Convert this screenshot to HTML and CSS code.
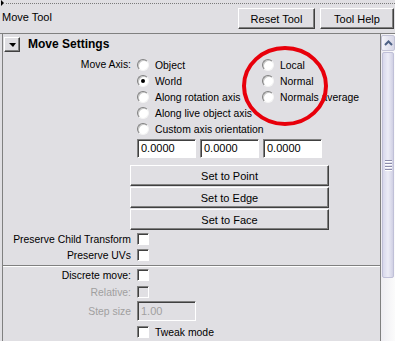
FILE: index.html
```html
<!DOCTYPE html>
<html lang="en">
  <head>
    <meta charset="UTF-8" />
    <title>Move Tool</title>
    <link rel="stylesheet" href="styles.css">
  </head>
  <body>
    <div class="dots_row"><span class="dots_arrow"></span><span class="dots_line"></span></div>
    <div class="tool_row">
      <span class="tool_name">Move Tool</span>
      <button class="btn btn_top btn_reset">Reset Tool</button>
      <button class="btn btn_top btn_help">Tool Help</button>
    </div>

    <div class="frame">
      <div class="panel">
        <div class="section_head">
          <span class="btn fold"><span class="fold_tri"></span></span>
          <span class="section_title">Move Settings</span>
        </div>

        <!-- move axis -->
        <div class="row axis_row">
          <span class="lbl">Move Axis:</span>
          <div class="axis_grid">
            <label class="opt"><span class="radio"></span>Object</label>
            <label class="opt"><span class="radio on"></span>World</label>
            <label class="opt"><span class="radio"></span>Along rotation axis</label>
            <label class="opt"><span class="radio"></span>Along live object axis</label>
            <label class="opt"><span class="radio"></span>Custom axis orientation</label>
            <label class="opt"><span class="radio"></span>Local</label>
            <label class="opt"><span class="radio"></span>Normal</label>
            <label class="opt"><span class="radio"></span>Normals average</label>
          </div>
        </div>

        <div class="fields">
          <span class="field">0.0000</span>
          <span class="field">0.0000</span>
          <span class="field">0.0000</span>
        </div>

        <div class="set_btns">
          <button class="btn btn_set">Set to Point</button>
          <button class="btn btn_set">Set to Edge</button>
          <button class="btn btn_set">Set to Face</button>
        </div>

        <div class="row check_row first_check">
          <span class="lbl">Preserve Child Transform</span>
          <span class="check"></span>
        </div>
        <div class="row check_row">
          <span class="lbl">Preserve UVs</span>
          <span class="check"></span>
        </div>

        <div class="sep"></div>

        <div class="row check_row discrete">
          <span class="lbl">Discrete move:</span>
          <span class="check"></span>
        </div>
        <div class="row check_row off">
          <span class="lbl">Relative:</span>
          <span class="check dis"></span>
        </div>
        <div class="row step_row off">
          <span class="lbl">Step size</span>
          <span class="field field_dis">1.00</span>
        </div>
        <div class="row check_row tweak">
          <span class="lbl"></span>
          <label class="opt"><span class="check"></span>Tweak mode</label>
        </div>
      </div>

      <div class="scrollbar">
        <div class="sb_up">
          <svg width="9" height="6" viewBox="0 0 9 6"><path d="M1 5 L4.5 1.5 L8 5" fill="none" stroke="#4d6185" stroke-width="2"/></svg>
        </div>
        <div class="sb_thumb">
          <span class="grip"></span><span class="grip"></span><span class="grip"></span><span class="grip"></span>
        </div>
        <div class="sb_track"></div>
      </div>
    </div>

    <svg class="mark" width="395" height="341" viewBox="0 0 395 341">
      <ellipse cx="285" cy="86" rx="41" ry="38" fill="none" stroke="#e8000b" stroke-width="4"/>
    </svg>
  </body>
</html>
```

FILE: styles.css
```css
  /* 기본 */
  body {
    margin: 0;
    width: 395px;
    height: 341px;
    overflow: hidden;
    background: #e0dfe3;
    font-family: "Liberation Sans", Arial, sans-serif;
    font-size: 10.4px;
    color: #000;
    position: relative;
  }

  /* 상단 점선 */
  .dots_row {
    display: flex;
    align-items: center;
    height: 6px;
  }
  .dots_arrow {
    width: 0;
    height: 0;
    margin-left: 1px;
    border-left: 3px solid #000;
    border-top: 3px solid transparent;
    border-bottom: 3px solid transparent;
  }
  .dots_line {
    flex: 1;
    margin-left: 2px;
    border-top: 1px dotted #7a7a7a;
  }

  /* 툴 이름 + 버튼 */
  .tool_row {
    display: flex;
    align-items: center;
    height: 21px;
    margin-top: 2px;
  }
  .tool_name {
    margin-left: 2px;
    margin-top: -3px;
    font-size: 11px;
  }

  .btn {
    background: #e0dfe3;
    border: 1px solid;
    border-color: #fff #404040 #404040 #fff;
    box-shadow: inset -1px -1px #808080;
    font-family: "Liberation Sans", Arial, sans-serif;
    font-size: 11px;
    color: #000;
    padding: 0;
    box-sizing: border-box;
  }
  .btn_top {
    height: 21px;
  }
  .btn_reset {
    margin-left: auto;
    width: 77px;
  }
  .btn_help {
    margin-left: 5px;
    margin-right: 1px;
    width: 74px;
  }

  /* 프레임 */
  .frame {
    display: flex;
    margin-top: 4px;
    border-top: 1px solid #808080;
    height: 307px;
  }
  .panel {
    flex: 1;
    margin-left: 2px;
    border-left: 1px solid #808080;
    border-right: 1px solid #808080;
  }

  .section_head {
    display: flex;
    align-items: center;
    height: 19px;
  }
  .fold {
    display: flex;
    align-items: center;
    justify-content: center;
    width: 16px;
    height: 15px;
    margin-left: 1px;
    margin-top: 1px;
  }
  .fold_tri {
    width: 0;
    height: 0;
    margin-top: 1px;
    border-top: 4px solid #000;
    border-left: 4px solid transparent;
    border-right: 3px solid transparent;
  }
  .section_title {
    margin-left: 8px;
    font-size: 12px;
    font-weight: bold;
  }

  /* 행 */
  .row {
    display: flex;
    align-items: center;
  }
  .lbl {
    width: 128px;
    margin-right: 6px;
    flex-shrink: 0;
    text-align: right;
    white-space: nowrap;
  }
  .axis_row {
    align-items: flex-start;
    margin-top: 4px;
  }
  .axis_row .lbl {
    line-height: 16px;
  }
  .axis_grid {
    display: grid;
    grid-template-columns: 125px auto;
    grid-template-rows: repeat(5, 16px);
    grid-auto-flow: column;
  }
  .opt {
    display: flex;
    align-items: center;
    white-space: nowrap;
  }

  .radio {
    flex-shrink: 0;
    width: 12px;
    height: 12px;
    margin-right: 6px;
    box-sizing: border-box;
    border-radius: 50%;
    border: 1px solid;
    border-color: #808080 #f4f4f4 #f4f4f4 #808080;
    box-shadow: inset 1px 1px #c8c8c8;
    background: #fff;
    position: relative;
  }
  .radio.on::after {
    content: "";
    position: absolute;
    left: 3px;
    top: 3px;
    width: 4px;
    height: 4px;
    border-radius: 50%;
    background: #000;
  }

  .check {
    flex-shrink: 0;
    width: 12px;
    height: 12px;
    box-sizing: border-box;
    border: 1px solid;
    border-color: #808080 #fff #fff #808080;
    box-shadow: inset 1px 1px #404040;
    background: #fff;
  }
  .check.dis {
    background: #e0dfe3;
  }
  .opt .check {
    margin-right: 6px;
  }

  /* 입력칸 */
  .fields {
    display: flex;
    gap: 4px;
    margin: 2px 0 0 134px;
  }
  .field {
    width: 59px;
    height: 19px;
    line-height: 17px;
    padding-left: 3px;
    box-sizing: border-box;
    border: 1px solid;
    border-color: #808080 #fff #fff #808080;
    box-shadow: inset 1px 1px #404040;
    background: #fff;
    font-size: 11px;
  }
  .field_dis {
    width: 59px;
    height: 20px;
    line-height: 18px;
    background: #e0dfe3;
    color: #a0a0a0;
  }

  /* Set to 버튼 */
  .set_btns {
    display: flex;
    flex-direction: column;
    gap: 1px;
    width: 199px;
    margin: 7px 0 0 127px;
  }
  .btn_set {
    height: 21px;
  }

  .check_row {
    height: 16px;
  }
  .first_check {
    margin-top: 1px;
  }

  .sep {
    margin-top: 2px;
    border-top: 1px solid #808080;
    border-bottom: 1px solid #fff;
  }

  .off .lbl {
    color: #a0a0a0;
  }
  .off.check_row {
    margin-top: 1px;
  }
  .step_row {
    height: 20px;
    margin-top: 1px;
  }
  .tweak {
    margin-top: 3px;
  }

  /* 스크롤바 */
  .scrollbar {
    width: 14px;
    display: flex;
    flex-direction: column;
    background: linear-gradient(to right, #eeedf2, #fbfbfb);
  }
  .sb_up {
    height: 16px;
    margin-top: 1px;
    display: flex;
    align-items: center;
    justify-content: center;
    box-sizing: border-box;
    border: 1px solid #c3c3d6;
    border-radius: 2px;
    background: linear-gradient(to right, #f4f4fa, #d6d6e6);
  }
  .sb_thumb {
    height: 226px;
    margin: 1px 1px 0 1px;
    box-sizing: border-box;
    border: 1px solid #c0c0d8;
    border-radius: 2px;
    background: linear-gradient(to right, #d8d8ec, #ececf6 50%, #d0d0e4);
    display: flex;
    flex-direction: column;
    align-items: center;
    justify-content: center;
    gap: 1px;
  }
  .grip {
    width: 7px;
    height: 1px;
    background: #8c8cab;
    border-bottom: 1px solid #fff;
  }
  .sb_track {
    flex: 1;
  }

  /* 빨간 동그라미 표시 */
  .mark {
    position: absolute;
    left: 0;
    top: 0;
    pointer-events: none;
  }
```
